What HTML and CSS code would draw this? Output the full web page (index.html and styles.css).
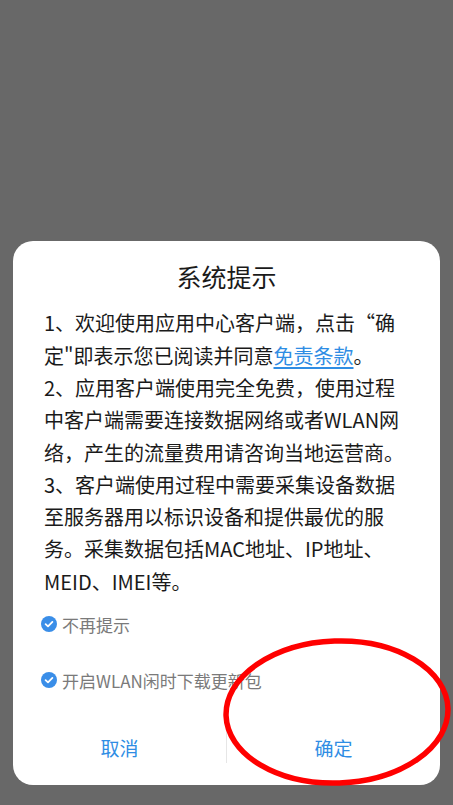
FILE: index.html
```html
<!DOCTYPE html>
<html lang="zh-CN">
<head>
<meta charset="utf-8">
<link rel="stylesheet" href="styles.css">
</head>
<body>
<div class="screen">
  <div class="dialog">
    <div class="title">系统提示</div>
    <div class="body">
      <p>1、欢迎使用应用中心客户端，点击“确定"即表示您已阅读并同意<a class="link">免责条款</a>。</p>
      <p>2、应用客户端使用完全免费，使用过程中客户端需要连接数据网络或者WLAN网络，产生的流量费用请咨询当地运营商。</p>
      <p>3、客户端使用过程中需要采集设备数据至服务器用以标识设备和提供最优的服务。采集数据包括MAC地址、IP地址、MEID、IMEI等。</p>
    </div>
    <div class="checks">
      <div class="check"><span class="tick"><svg viewBox="0 0 16 16" width="16" height="16"><circle cx="8" cy="8" r="8" fill="#3a8ee8"/><path d="M4.6 8.2 L7 10.4 L11.4 5.9" fill="none" stroke="#fff" stroke-width="1.8" stroke-linecap="round" stroke-linejoin="round"/></svg></span>不再提示</div>
      <div class="check"><span class="tick"><svg viewBox="0 0 16 16" width="16" height="16"><circle cx="8" cy="8" r="8" fill="#3a8ee8"/><path d="M4.6 8.2 L7 10.4 L11.4 5.9" fill="none" stroke="#fff" stroke-width="1.8" stroke-linecap="round" stroke-linejoin="round"/></svg></span>开启WLAN闲时下载更新包</div>
    </div>
    <div class="buttons">
      <div class="btn">取消</div>
      <div class="sep"></div>
      <div class="btn">确定</div>
    </div>
  </div>
  <svg class="mark" viewBox="0 0 240 160" width="240" height="160"><ellipse cx="115" cy="75" rx="111" ry="71" fill="none" stroke="#ff0000" stroke-width="5.5" transform="rotate(-2 115 75)"/></svg>
</div>
</body>
</html>
```
FILE: styles.css
```css
html, body {
  margin: 0;
  padding: 0;
}
body {
  width: 453px;
  height: 805px;
  background: #686868;
  font-family: "Noto Sans CJK SC", "Noto Sans", sans-serif;
  overflow: hidden;
}
.screen {
  position: relative;
  width: 453px;
  height: 805px;
  display: flex;
  flex-direction: column;
  justify-content: flex-end;
  padding: 0 13px 20px 13px;
  box-sizing: border-box;
}
.dialog {
  background: #fff;
  border-radius: 20px;
  padding: 18px 0 13px 0;
  display: flex;
  flex-direction: column;
}
.title {
  text-align: center;
  font-size: 25px;
  line-height: 34px;
  color: #1a1a1a;
}
.body {
  margin-top: 14px;
  padding: 0 25px 0 31px;
  font-size: 20px;
  line-height: 32.3px;
  color: #1a1a1a;
}
.body p {
  margin: 0;
}
.link {
  color: #2f8de4;
  text-decoration: underline;
  text-underline-offset: 3px;
}
.checks {
  margin-top: 10px;
  padding-left: 28px;
  display: flex;
  flex-direction: column;
  gap: 24px;
}
.check {
  display: flex;
  align-items: center;
  height: 32px;
  font-size: 17px;
  color: #7a7a7a;
}
.tick {
  display: flex;
  margin-right: 5px;
}
.buttons {
  margin-top: 26px;
  height: 50px;
  display: flex;
  align-items: center;
}
.btn {
  flex: 1;
  text-align: center;
  font-size: 19px;
  color: #2f8de4;
}
.sep {
  width: 1px;
  height: 32px;
  background: #e6e6e6;
}
.mark {
  position: absolute;
  left: 222px;
  top: 637px;
}
```
